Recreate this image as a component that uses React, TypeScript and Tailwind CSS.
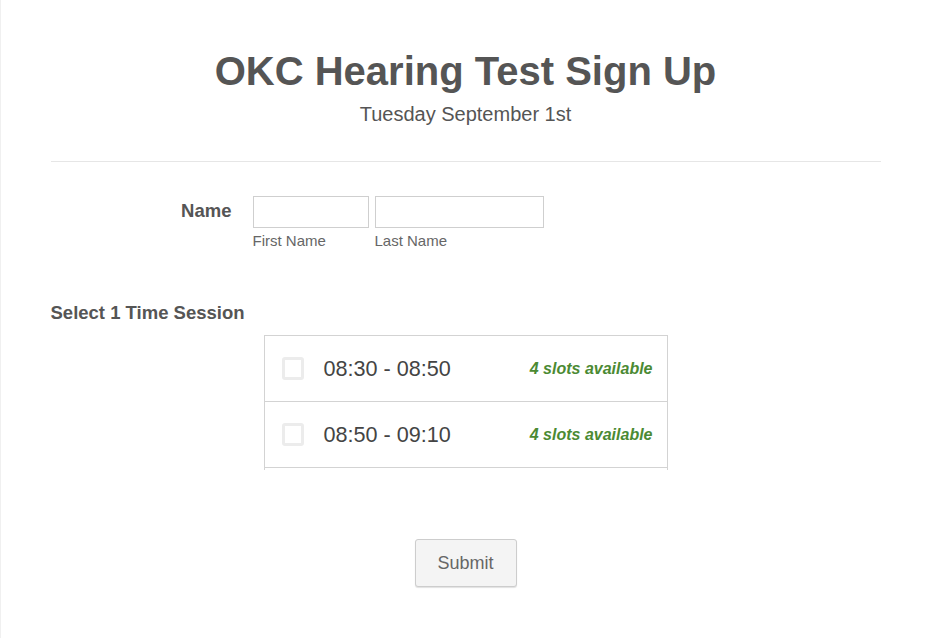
import React from "react";

const font = { fontFamily: '"Liberation Sans", Arial, sans-serif' };

function Row({ time }: { time: string }) {
  return (
    <div className="flex h-[66px] shrink-0 items-center border-b border-[#d3d3d3] pl-[17px] pr-[14px]">
      <span className="box-border h-[23px] w-[22px] rounded-[3px] border-[3px] border-[#ececec] bg-white" />
      <span className="ml-[20px] text-[21.6px] leading-none text-[#444]">{time}</span>
      <span className="ml-auto text-[16px] font-bold italic leading-none text-[#4b8a33]">4 slots available</span>
    </div>
  );
}

export default function App() {
  return (
    <div className="min-h-screen border-l border-[#f0f0f0] bg-white" style={font}>
      <div className="mx-auto w-[830px] pt-[47px]">
        <h1 className="text-center text-[40px] font-bold leading-[48px] text-[#555]">OKC Hearing Test Sign Up</h1>
        <p className="mt-[7px] text-center text-[20px] leading-[24px] text-[#555]">Tuesday September 1st</p>
        <div className="mt-[35px] h-px bg-[#e6e6e6]" />

        <div className="mt-[34px] flex items-start">
          <div className="w-[181px] pt-[4px] text-right text-[18.5px] font-bold leading-[22px] text-[#555]">Name</div>
          <div className="ml-[21px] flex gap-[6px]">
            <div className="flex flex-col">
              <div className="h-[32px] w-[116px] border border-[#cfcfcf] bg-white" />
              <span className="mt-[4px] text-[15px] leading-[18px] text-[#666]">First Name</span>
            </div>
            <div className="flex flex-col">
              <div className="h-[32px] w-[169px] border border-[#cfcfcf] bg-white" />
              <span className="mt-[4px] text-[15px] leading-[18px] text-[#666]">Last Name</span>
            </div>
          </div>
        </div>

        <div className="mt-[52px] text-[18.5px] font-bold leading-[22px] text-[#555]">Select 1 Time Session</div>

        <div className="ml-[213px] mt-[11px] flex h-[135px] w-[404px] flex-col overflow-hidden border-x border-t border-[#d3d3d3]">
          <Row time="08:30 - 08:50" />
          <Row time="08:50 - 09:10" />
          <div className="h-[66px] shrink-0" />
        </div>

        <div className="mt-[69px] flex justify-center">
          <button className="h-[48px] w-[102px] rounded-[3px] border border-[#cdcdcd] bg-[#f4f4f4] text-[18px] text-[#666] shadow-[0_1px_1px_rgba(0,0,0,0.12)]">
            Submit
          </button>
        </div>
      </div>
    </div>
  );
}
